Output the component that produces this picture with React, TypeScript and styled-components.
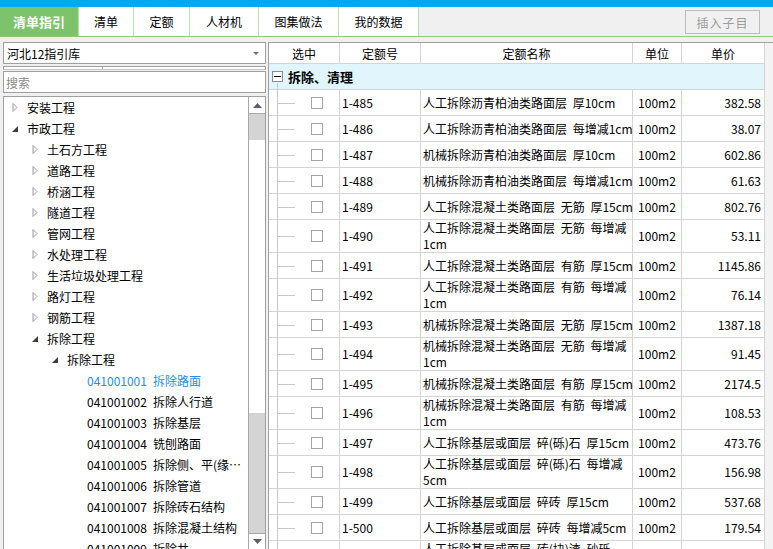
import React from "react";
import styled, { createGlobalStyle } from "styled-components";

const GlobalStyle = createGlobalStyle`
  * { box-sizing: border-box; }
  html, body { margin: 0; padding: 0; background: #f0f0f0; }
  body {
    font-family: "Noto Sans CJK SC", "Noto Sans", sans-serif;
    font-size: 12px;
    color: #000;
  }
`;

const COLS = "71px 81px 212px 49px 83px";

const Screen = styled.div`
  width: 773px;
  height: 549px;
  overflow: hidden;
  display: flex;
  flex-direction: column;
  background: #f0f0f0;
`;

const TopStrip = styled.div`
  height: 7px;
  flex: none;
  background: #00a8ec;
`;

const TabBar = styled.div`
  height: 30px;
  flex: none;
  display: flex;
  border-bottom: 1px solid #8ccb78;
`;

const Tab = styled.div<{ $active?: boolean; $w: number }>`
  width: ${(p) => p.$w}px;
  flex: none;
  display: flex;
  align-items: center;
  justify-content: center;
  border-right: 1px solid #b6e4a6;
  background: ${(p) => (p.$active ? "#7dc36b" : "#fff")};
  color: ${(p) => (p.$active ? "#fff" : "#000")};
  font-size: ${(p) => (p.$active ? 13 : 12)}px;
  font-weight: ${(p) => (p.$active ? 700 : 400)};
`;

const InsertButton = styled.button`
  margin: 3px 13px 0 auto;
  width: 75px;
  height: 24px;
  padding: 0;
  border: 1px solid #bcbcbc;
  background: #f0f0f0;
  color: #9c9c9c;
  font-family: inherit;
  font-size: 12px;
  letter-spacing: 1px;
`;

const Body = styled.div`
  flex: 1;
  min-height: 0;
  display: flex;
  gap: 2px;
  padding: 5px 0 0 3px;
`;

const LeftPane = styled.div`
  width: 263px;
  flex: none;
  display: flex;
  flex-direction: column;
`;

const Select = styled.div`
  height: 22px;
  flex: none;
  border: 1px solid #a0a0a0;
  background: #fff;
  display: flex;
  align-items: center;
  justify-content: space-between;
  padding: 0 6px 0 3px;
`;

const ListHead = styled.div`
  height: 4px;
  flex: none;
  margin-top: 2px;
  border: 1px solid #a0a0a0;
  border-bottom-color: #c4c4c4;
  background: #fff;
  display: flex;
`;

const ListHeadCol = styled.div`
  width: 99px;
  border-right: 1px solid #b0b0b0;
`;

const Search = styled.div`
  height: 22px;
  flex: none;
  margin-top: 1px;
  border: 1px solid #a0a0a0;
  background: #fff;
  color: #8a8a8a;
  padding-left: 2px;
  display: flex;
  align-items: center;
`;

const TreeBox = styled.div`
  flex: 1;
  min-height: 0;
  margin-top: 3px;
  border: 1px solid #a0a0a0;
  border-bottom: none;
  background: #fff;
  display: flex;
`;

const TreeList = styled.div`
  flex: 1;
  min-width: 0;
  overflow: hidden;
`;

const TreeRow = styled.div<{ $level: number; $active?: boolean }>`
  height: 21px;
  display: flex;
  align-items: center;
  padding-left: ${(p) => 8 + p.$level * 20}px;
  white-space: nowrap;
  color: ${(p) => (p.$active ? "#1d8fe8" : "#000")};
`;

const Toggle = styled.span`
  width: 15px;
  flex: none;
  display: flex;
  align-items: center;
`;

const Code = styled.span`
  width: 66px;
  flex: none;
`;

const Label = styled.span<{ $leaf?: boolean }>`
  min-width: 0;
  max-width: ${(p) => (p.$leaf ? "90px" : "none")};
  overflow: hidden;
  text-overflow: ellipsis;
`;

const ScrollBar = styled.div`
  width: 17px;
  flex: none;
  border-left: 1px solid #a8a8a8;
  background: #d4d4d4;
  display: flex;
  flex-direction: column;
`;

const ScrollButton = styled.div<{ $down?: boolean }>`
  height: ${(p) => (p.$down ? 16 : 17)}px;
  flex: none;
  margin-top: ${(p) => (p.$down ? "auto" : "0")};
  background: #fff;
  border-top: ${(p) => (p.$down ? "1px solid #a8a8a8" : "none")};
  border-bottom: ${(p) => (p.$down ? "none" : "1px solid #a8a8a8")};
  display: flex;
  align-items: center;
  justify-content: center;
`;

const Thumb = styled.div`
  height: 273px;
  flex: none;
  margin-top: 26px;
  background: #fff;
`;

const RightPane = styled.div`
  flex: 1;
  min-width: 0;
  border-top: 1px solid #a0a0a0;
  border-left: 1px solid #a0a0a0;
  background: #f3f3f3;
  overflow: hidden;
`;

const HeaderRow = styled.div`
  display: grid;
  grid-template-columns: ${COLS};
  width: 496px;
  height: 21px;
  background: #fff;
`;

const HeadCell = styled.div`
  border-right: 1px solid #d4d4d4;
  border-bottom: 1px solid #d4d4d4;
  display: flex;
  align-items: center;
  justify-content: center;
`;

const GroupRow = styled.div`
  position: relative;
  width: 496px;
  height: 26px;
  background: #e1f5fd;
  border-bottom: 1px solid #d4d4d4;
  border-right: 1px solid #d4d4d4;
  display: flex;
  align-items: center;
  padding-left: 3px;
  font-size: 13px;
  font-weight: 700;

  &::after {
    content: "";
    position: absolute;
    left: 8px;
    top: 19px;
    bottom: -1px;
    width: 1px;
    background: #c8c8c8;
  }
`;

const MinusBox = styled.span`
  width: 11px;
  height: 11px;
  margin-right: 5px;
  border: 1px solid #8c8c8c;
  background: #fff;
  display: flex;
  align-items: center;
  justify-content: center;

  &::before {
    content: "";
    width: 7px;
    height: 1px;
    background: #000;
  }
`;

const DataRow = styled.div`
  display: grid;
  grid-template-columns: ${COLS};
  width: 496px;
  min-height: 26px;
  background: #fff;
`;

const Cell = styled.div<{ $align?: "left" | "center" | "right" }>`
  border-right: 1px solid #d4d4d4;
  border-bottom: 1px solid #d4d4d4;
  display: flex;
  align-items: center;
  justify-content: ${(p) =>
    p.$align === "center" ? "center" : p.$align === "right" ? "flex-end" : "flex-start"};
  padding: 0 ${(p) => (p.$align === "right" ? 3 : 2)}px 0 2px;
  line-height: 16px;
  white-space: nowrap;
`;

const NameLines = styled.div`
  word-spacing: 3px;
`;

const PickCell = styled(Cell)`
  position: relative;
  padding-left: 42px;

  &::before {
    content: "";
    position: absolute;
    left: 8px;
    top: 0;
    bottom: -1px;
    width: 1px;
    background: #c8c8c8;
  }

  &::after {
    content: "";
    position: absolute;
    left: 8px;
    top: 50%;
    width: 18px;
    height: 1px;
    background: #c8c8c8;
  }
`;

const Check = styled.span`
  width: 12px;
  height: 12px;
  border: 1px solid #a4a4a4;
  background: #fff;
`;

type TreeNode = {
  label: string;
  level: number;
  state?: "open" | "closed";
  code?: string;
  active?: boolean;
};

const tree: TreeNode[] = [
  { label: "安装工程", level: 0, state: "closed" },
  { label: "市政工程", level: 0, state: "open" },
  { label: "土石方工程", level: 1, state: "closed" },
  { label: "道路工程", level: 1, state: "closed" },
  { label: "桥涵工程", level: 1, state: "closed" },
  { label: "隧道工程", level: 1, state: "closed" },
  { label: "管网工程", level: 1, state: "closed" },
  { label: "水处理工程", level: 1, state: "closed" },
  { label: "生活垃圾处理工程", level: 1, state: "closed" },
  { label: "路灯工程", level: 1, state: "closed" },
  { label: "钢筋工程", level: 1, state: "closed" },
  { label: "拆除工程", level: 1, state: "open" },
  { label: "拆除工程", level: 2, state: "open" },
  { code: "041001001", label: "拆除路面", level: 3, active: true },
  { code: "041001002", label: "拆除人行道", level: 3 },
  { code: "041001003", label: "拆除基层", level: 3 },
  { code: "041001004", label: "铣刨路面", level: 3 },
  { code: "041001005", label: "拆除侧、平(缘)石", level: 3 },
  { code: "041001006", label: "拆除管道", level: 3 },
  { code: "041001007", label: "拆除砖石结构", level: 3 },
  { code: "041001008", label: "拆除混凝土结构", level: 3 },
  { code: "041001009", label: "拆除井", level: 3 },
];

type Quota = { no: string; name: string[]; unit: string; price: string };

const quotas: Quota[] = [
  { no: "1-485", name: ["人工拆除沥青柏油类路面层 厚10cm"], unit: "100m2", price: "382.58" },
  { no: "1-486", name: ["人工拆除沥青柏油类路面层 每增减1cm"], unit: "100m2", price: "38.07" },
  { no: "1-487", name: ["机械拆除沥青柏油类路面层 厚10cm"], unit: "100m2", price: "602.86" },
  { no: "1-488", name: ["机械拆除沥青柏油类路面层 每增减1cm"], unit: "100m2", price: "61.63" },
  { no: "1-489", name: ["人工拆除混凝土类路面层 无筋 厚15cm"], unit: "100m2", price: "802.76" },
  { no: "1-490", name: ["人工拆除混凝土类路面层 无筋 每增减", "1cm"], unit: "100m2", price: "53.11" },
  { no: "1-491", name: ["人工拆除混凝土类路面层 有筋 厚15cm"], unit: "100m2", price: "1145.86" },
  { no: "1-492", name: ["人工拆除混凝土类路面层 有筋 每增减", "1cm"], unit: "100m2", price: "76.14" },
  { no: "1-493", name: ["机械拆除混凝土类路面层 无筋 厚15cm"], unit: "100m2", price: "1387.18" },
  { no: "1-494", name: ["机械拆除混凝土类路面层 无筋 每增减", "1cm"], unit: "100m2", price: "91.45" },
  { no: "1-495", name: ["机械拆除混凝土类路面层 有筋 厚15cm"], unit: "100m2", price: "2174.5" },
  { no: "1-496", name: ["机械拆除混凝土类路面层 有筋 每增减", "1cm"], unit: "100m2", price: "108.53" },
  { no: "1-497", name: ["人工拆除基层或面层 碎(砾)石 厚15cm"], unit: "100m2", price: "473.76" },
  { no: "1-498", name: ["人工拆除基层或面层 碎(砾)石 每增减", "5cm"], unit: "100m2", price: "156.98" },
  { no: "1-499", name: ["人工拆除基层或面层 碎砖 厚15cm"], unit: "100m2", price: "537.68" },
  { no: "1-500", name: ["人工拆除基层或面层 碎砖 每增减5cm"], unit: "100m2", price: "179.54" },
  { no: "1-501", name: ["人工拆除基层或面层 砖(块)渣 砂砾", "厚15cm"], unit: "100m2", price: "412.30" },
];

const tabs = [
  { label: "清单指引", w: 79, active: true },
  { label: "清单", w: 55 },
  { label: "定额", w: 56 },
  { label: "人材机", w: 69 },
  { label: "图集做法", w: 80 },
  { label: "我的数据", w: 80 },
];

const ClosedIcon = () => (
  <svg width="6" height="9" viewBox="0 0 6 9">
    <polygon points="1,0.5 5,4.5 1,8.5" fill="#fff" stroke="#9a9a9a" strokeWidth="1" />
  </svg>
);

const OpenIcon = () => (
  <svg width="6" height="6" viewBox="0 0 6 6">
    <polygon points="6,0 6,6 0,6" fill="#3c3c3c" />
  </svg>
);

const Arrow = ({ up }: { up?: boolean }) => (
  <svg width="9" height="5" viewBox="0 0 9 5">
    <polygon points={up ? "4.5,0 9,5 0,5" : "0,0 9,0 4.5,5"} fill="#5c5c6c" />
  </svg>
);

export default function App() {
  return (
    <>
      <GlobalStyle />
      <Screen>
        <TopStrip />
        <TabBar>
          {tabs.map((t) => (
            <Tab key={t.label} $w={t.w} $active={t.active}>
              {t.label}
            </Tab>
          ))}
          <InsertButton>插入子目</InsertButton>
        </TabBar>
        <Body>
          <LeftPane>
            <Select>
              <span>河北12指引库</span>
              <svg width="6" height="3" viewBox="0 0 6 3">
                <polygon points="0,0 6,0 3,3" fill="#707070" />
              </svg>
            </Select>
            <ListHead>
              <ListHeadCol />
            </ListHead>
            <Search>搜索</Search>
            <TreeBox>
              <TreeList>
                {tree.map((n, i) => (
                  <TreeRow key={i} $level={n.level} $active={n.active}>
                    <Toggle>
                      {n.state === "closed" && <ClosedIcon />}
                      {n.state === "open" && <OpenIcon />}
                    </Toggle>
                    {n.code && <Code>{n.code}</Code>}
                    <Label $leaf={!!n.code}>{n.label}</Label>
                  </TreeRow>
                ))}
              </TreeList>
              <ScrollBar>
                <ScrollButton>
                  <Arrow up />
                </ScrollButton>
                <Thumb />
                <ScrollButton $down>
                  <Arrow />
                </ScrollButton>
              </ScrollBar>
            </TreeBox>
          </LeftPane>
          <RightPane>
            <HeaderRow>
              <HeadCell>选中</HeadCell>
              <HeadCell>定额号</HeadCell>
              <HeadCell>定额名称</HeadCell>
              <HeadCell>单位</HeadCell>
              <HeadCell>单价</HeadCell>
            </HeaderRow>
            <GroupRow>
              <MinusBox />
              拆除、清理
            </GroupRow>
            {quotas.map((q) => (
              <DataRow key={q.no}>
                <PickCell>
                  <Check />
                </PickCell>
                <Cell>{q.no}</Cell>
                <Cell>
                  <NameLines>
                    {q.name.map((line) => (
                      <div key={line}>{line}</div>
                    ))}
                  </NameLines>
                </Cell>
                <Cell $align="center">{q.unit}</Cell>
                <Cell $align="right">{q.price}</Cell>
              </DataRow>
            ))}
          </RightPane>
        </Body>
      </Screen>
    </>
  );
}
